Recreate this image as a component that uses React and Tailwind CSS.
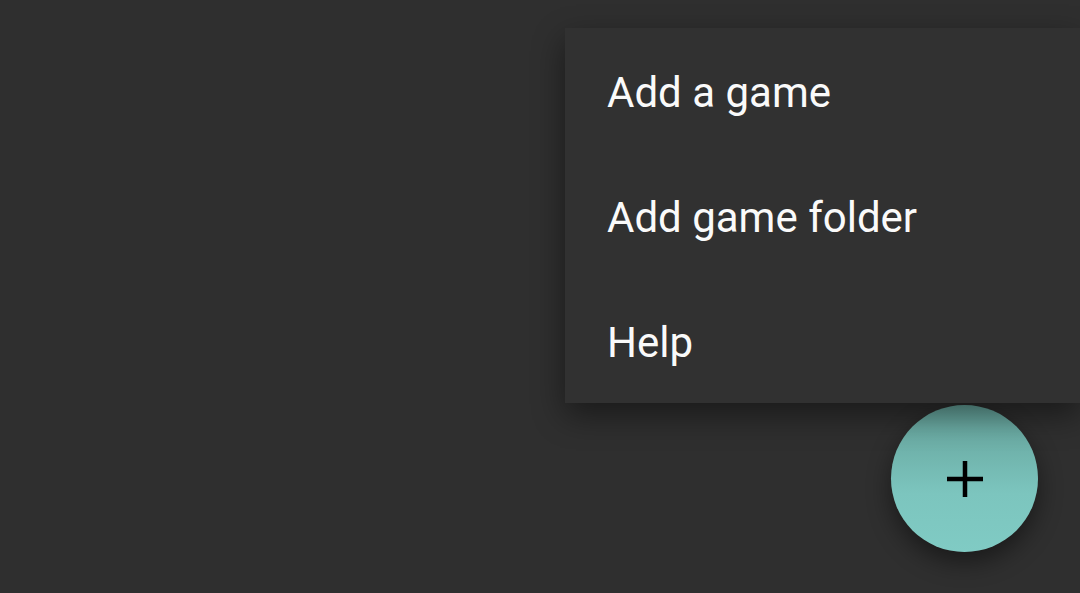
import React from 'react';

const items = ['Add a game', 'Add game folder', 'Help'];

const App = () => {
  return (
    <div
      className="relative h-[593px] w-full overflow-hidden bg-[#2f2f2f]"
      style={{ fontFamily: 'Roboto, "Noto Sans", sans-serif' }}
    >
      {/* Floating action button */}
      <button className="absolute left-[891px] top-[405px] flex h-[147px] w-[147px] items-center justify-center rounded-full bg-gradient-to-b from-[#63a098] via-[#7cc5be] via-60% to-[#80cbc4] shadow-[0_10px_24px_rgba(0,0,0,0.45)]">
        <svg width="38" height="38" viewBox="0 0 38 38" className="text-black">
          <path d="M19 1v36M1 19h36" stroke="currentColor" strokeWidth="4.5" />
        </svg>
      </button>

      {/* Overflow menu */}
      <div className="absolute right-0 top-[28px] flex w-[515px] flex-col bg-[#313131] shadow-[0_12px_30px_rgba(0,0,0,0.45)]">
        {items.map((label) => (
          <div key={label} className="flex h-[125px] items-center pl-[42px] pt-[4px] text-[42px] leading-none text-[#fafafa]">
            {label}
          </div>
        ))}
      </div>
    </div>
  );
};

export default App;
